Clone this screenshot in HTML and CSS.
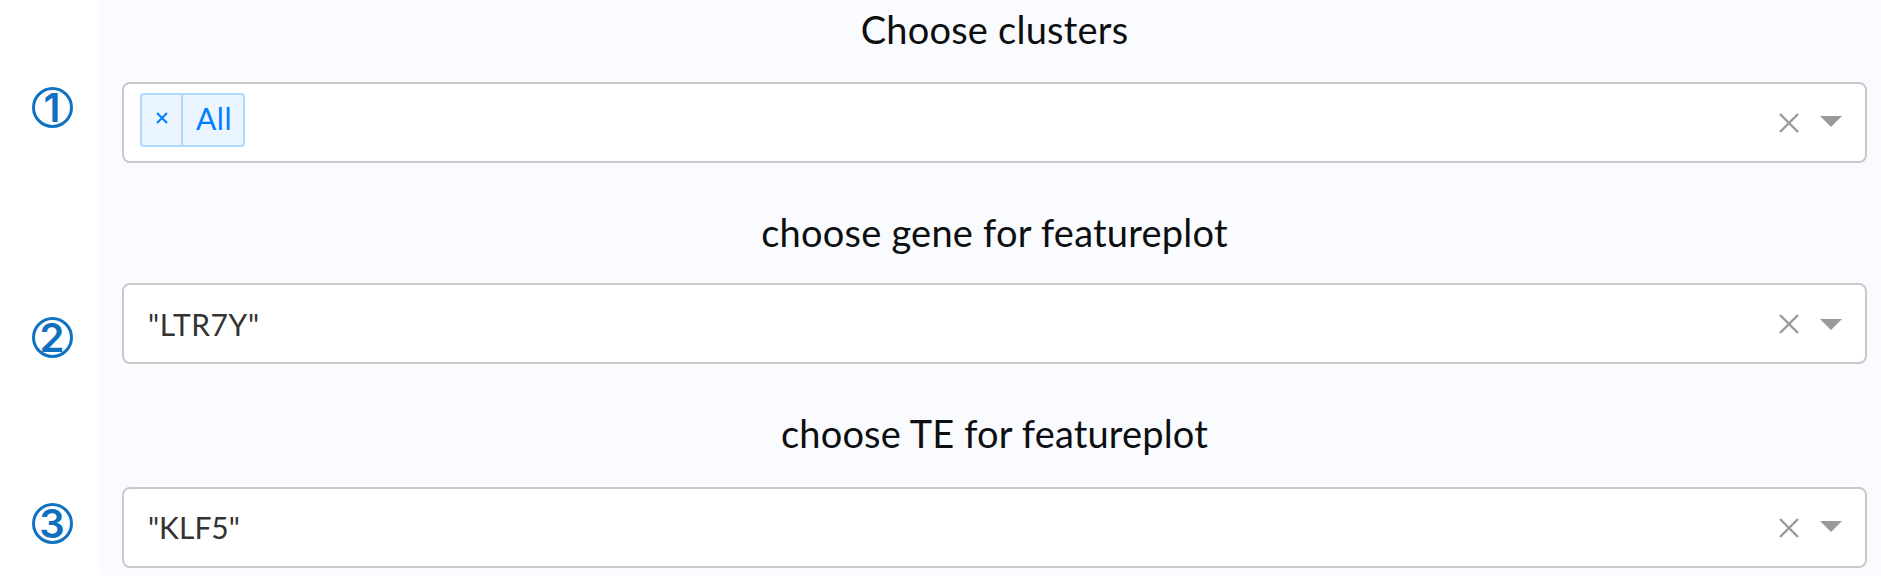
FILE: index.html
```html
<!DOCTYPE html>
<html lang="en">
<head>
<meta charset="utf-8">
<title>Clusters and features</title>
<link rel="stylesheet" href="styles.css">
</head>
<body>
<div class="page">
  <aside class="steps">
    <div class="step">1</div>
    <div class="step step-two">2</div>
    <div class="step step-three">3</div>
  </aside>
  <main class="panel">
    <h2 class="title title-clusters"><span>Choose clusters</span></h2>
    <div class="select">
      <div class="tag"><span class="tag-remove"><svg width="12" height="12" viewBox="0 0 12 12"><path d="M1 1L11 11M11 1L1 11" stroke="#007eff" stroke-width="2"/></svg></span><span class="tag-label">All</span></div>
      <svg class="clear" width="20" height="20" viewBox="0 0 20 20"><path d="M1 1L19 19M19 1L1 19"/></svg>
      <svg class="arrow arrow-first" width="22" height="11" viewBox="0 0 22 11"><path d="M0 0H22L11 11Z"/></svg>
    </div>
    <h2 class="title title-gene"><span>choose gene for featureplot</span></h2>
    <div class="select">
      <span class="value value-gene">"LTR7Y"</span>
      <svg class="clear" width="20" height="20" viewBox="0 0 20 20"><path d="M1 1L19 19M19 1L1 19"/></svg>
      <svg class="arrow arrow-second" width="22" height="11" viewBox="0 0 22 11"><path d="M0 0H22L11 11Z"/></svg>
    </div>
    <h2 class="title title-te"><span>choose TE for featureplot</span></h2>
    <div class="select">
      <span class="value value-te">"KLF5"</span>
      <svg class="clear" width="20" height="20" viewBox="0 0 20 20"><path d="M1 1L19 19M19 1L1 19"/></svg>
      <svg class="arrow" width="22" height="11" viewBox="0 0 22 11"><path d="M0 0H22L11 11Z"/></svg>
    </div>
  </main>
</div>
</body>
</html>
```
FILE: styles.css
```css
* { box-sizing: border-box; }
body { margin: 0; background: #fff; overflow: hidden; }
.page { display: flex; height: 575px; }
.steps { width: 99px; padding: 87px 0 0 32px; }
.step {
  width: 41px; height: 41px;
  border: 3px solid #1072c2; border-radius: 50%;
  color: #0f70c0; font: 600 40px/35px Inter, "Liberation Sans", sans-serif;
  letter-spacing: 1px;
  display: flex; justify-content: center;
}
.step-two { margin-top: 189px; }
.step-three { margin-top: 145px; }
.panel { flex: 1; background: #f9fbff; padding: 0 14px 0 23px; }
.title {
  margin: 0; display: flex; justify-content: center;
  color: #0c0e0f; font: 400 38px/60px Lato, sans-serif; letter-spacing: 0.22px; white-space: nowrap;
}
.title-clusters { height: 82px; line-height: 58px; }
.title-gene { height: 120px; padding-top: 39px; }
.title-te { height: 123px; padding-top: 39px; letter-spacing: 0.15px; }
.select {
  height: 81px; border: 2px solid #c9c9c9; border-radius: 8px; background: #fff;
  display: flex; align-items: center; padding: 0 23px 0 16px;
}
.tag {
  width: 105px; height: 54px; margin-bottom: 5px; display: flex;
  border: 2px solid #b2d8ff; border-radius: 4px; background: #ebf5ff; color: #007eff;
}
.tag-remove {
  width: 41px; border-right: 2px solid #b2d8ff;
  display: flex; align-items: center; justify-content: center; padding-bottom: 5px;
}
.tag-label { padding-left: 13px; font: 30px/46px Lato, sans-serif; letter-spacing: 0.6px; }
.value { padding-left: 8px; color: #333; font: 30px/40px Lato, sans-serif; }
.value-gene { letter-spacing: 0.6px; }
.value-te { margin-bottom: 2px; }
.clear { margin-left: auto; margin-top: 1px; stroke: #999; stroke-width: 2.4; }
.arrow { margin-left: 21px; margin-bottom: 3px; fill: #999; }
.arrow-first { margin-bottom: 3px; }
.arrow-second { margin-top: 2px; margin-bottom: 0; }
```
